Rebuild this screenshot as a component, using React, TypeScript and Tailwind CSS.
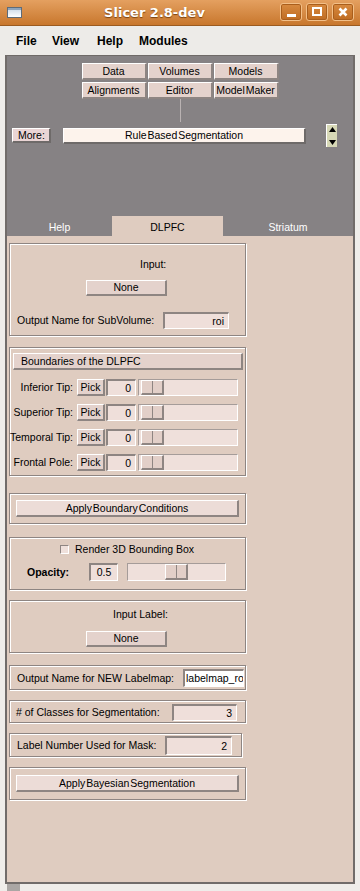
import React from "react";

const RAISED =
  "border-t border-l border-r-2 border-b-2 border-t-white border-l-white border-r-[#8e8582] border-b-[#8e8582]";
const SUNKEN =
  "border-t-2 border-l-2 border-r border-b border-t-[#8e8582] border-l-[#8e8582] border-r-white border-b-white";
const GROOVE =
  "border border-[#8e8582] shadow-[inset_1px_1px_0_#ffffff,1px_1px_0_#ffffff]";

function Btn({ className, children }: { className: string; children?: React.ReactNode }) {
  return (
    <div
      className={`flex items-center justify-center bg-[#e4d2cc] text-[10.5px] leading-none ${RAISED} ${className}`}
    >
      {children}
    </div>
  );
}

function Entry({ className, children }: { className: string; children?: React.ReactNode }) {
  return (
    <div
      className={`flex items-center overflow-hidden whitespace-nowrap text-[10.5px] leading-none ${SUNKEN} ${className}`}
    >
      {children}
    </div>
  );
}

function Slider({ className, thumb }: { className: string; thumb: string }) {
  return (
    <div
      className={`relative h-[17px] bg-[#efe0db] border border-t-[#a59c99] border-l-[#a59c99] border-r-white border-b-white ${className}`}
    >
      <div
        className={`absolute top-0 bottom-0 w-[23px] bg-[#e2cfc8] border-t border-l border-r-2 border-b-2 border-t-white border-l-white border-r-[#8e8582] border-b-[#8e8582] flex justify-center ${thumb}`}
      >
        <div className="w-[1px] h-full bg-[#8e8582]" />
      </div>
    </div>
  );
}

function TitleButton({ children }: { children: React.ReactNode }) {
  return (
    <div className="w-[22px] h-[18px] rounded-[3px] border border-[#f2bf88] bg-[linear-gradient(#d88a40,#bf6c22)] shadow-[inset_0_0_0_1px_#a95e1c] flex items-center justify-center">
      {children}
    </div>
  );
}

function PickRow({ label }: { label: string }) {
  return (
    <div className="h-[17px] flex items-center">
      <div className="w-[63px] text-right text-[10.5px] leading-none whitespace-nowrap">{label}</div>
      <Btn className="ml-[4px] w-[28px] h-[17px]">Pick</Btn>
      <Entry className="ml-[1px] w-[30px] h-[17px] justify-end pr-[4px] bg-[#efdfda]">0</Entry>
      <Slider className="ml-[2px] w-[100px]" thumb="left-[2px]" />
    </div>
  );
}

export default function App() {
  return (
    <div className="w-[360px] h-[891px] overflow-hidden bg-[#efedea] font-['Liberation_Sans',Arial,sans-serif] text-black">
      {/* Title bar */}
      <div className="h-[26px] flex items-center bg-[linear-gradient(#e4a060,#c8772d)] border-b border-[#9b5b20]">
        <div className="ml-[7px] w-[15px] h-[11px] border border-[#5e6b78] bg-[linear-gradient(#c7d6e6,#ffffff)] shadow-[inset_0_2px_0_#8ea4bb]" />
        <div className="flex-1 pl-[7px] text-center text-white font-['DejaVu_Sans',sans-serif] font-bold text-[13px] leading-none [text-shadow:0_1px_1px_#7a4210]">
          Slicer 2.8-dev
        </div>
        <div className="flex items-center gap-[4px] mr-[6px] pb-[2px]">
          <TitleButton>
            <div className="w-[9px] h-[3px] bg-white mt-[7px]" />
          </TitleButton>
          <TitleButton>
            <div className="w-[10px] h-[9px] border-2 border-white" />
          </TitleButton>
          <TitleButton>
            <svg width="10" height="10" viewBox="0 0 10 10">
              <path d="M1.5 1.5 L8.5 8.5 M8.5 1.5 L1.5 8.5" stroke="#ffffff" strokeWidth="2.6" />
            </svg>
          </TitleButton>
        </div>
      </div>

      {/* Menu bar */}
      <div className="h-[29px] flex items-center bg-[#edebe8] font-bold text-[12px] leading-none pt-[1px]">
        <span className="ml-[16px] w-[36px]">File</span>
        <span className="w-[45px]">View</span>
        <span className="w-[42px]">Help</span>
        <span>Modules</span>
      </div>

      {/* Main frame */}
      <div className="ml-[5px] w-[350px] border-x-2 border-[#716c6a] flex flex-col">
        {/* Gray module selector */}
        <div className="h-[161px] border-t border-[#6f6a68] bg-[#868284] flex flex-col">
          <div className="mt-[7px] self-center grid grid-cols-[65px_65px_65px] gap-x-[1px] gap-y-[2px]">
            <Btn className="h-[17px] bg-[#dccbc3]">Data</Btn>
            <Btn className="h-[17px] bg-[#dccbc3]">Volumes</Btn>
            <Btn className="h-[17px] bg-[#dccbc3]">Models</Btn>
            <Btn className="h-[17px] bg-[#dccbc3]">Alignments</Btn>
            <Btn className="h-[17px] bg-[#dccbc3]">Editor</Btn>
            <Btn className="h-[17px] bg-[#dccbc3] [word-spacing:-2px]">Model Maker</Btn>
          </div>
          <div className="self-center w-[1px] h-[23px] bg-[#b9b2b2]" />
          <div className="mt-[2px] h-[23px] flex items-center">
            <div className="ml-[5px] w-[39px] h-[15px] flex items-center pl-[5px] bg-[#ead5d5] text-[10.5px] leading-none border-t border-l border-r-2 border-b-2 border-t-white border-l-white border-r-[#6e6a69] border-b-[#6e6a69]">
              More:
            </div>
            <div className="ml-[12px] w-[243px] h-[16px] flex items-center justify-center bg-[#fdf3ec] text-[10.5px] leading-none [word-spacing:-2px] border-t border-l border-r-2 border-b-2 border-t-white border-l-white border-r-[#6e6a69] border-b-[#6e6a69]">
              Rule Based Segmentation
            </div>
            <div className="ml-[20px] w-[11px] h-[23px] bg-[#d7d8b6] border-t border-l border-t-white border-l-white flex flex-col items-center justify-between py-[2px]">
              <svg width="7" height="5" viewBox="0 0 7 5">
                <path d="M3.5 0 L7 5 L0 5 Z" fill="#000" />
              </svg>
              <svg width="7" height="5" viewBox="0 0 7 5">
                <path d="M0 0 L7 0 L3.5 5 Z" fill="#000" />
              </svg>
            </div>
          </div>
          <div className="flex-1" />
        </div>

        {/* Tabs */}
        <div className="h-[20px] flex bg-[#868284] text-[10.5px] leading-none">
          <div className="w-[105px] flex items-center justify-center pt-[3px] text-white">Help</div>
          <div className="w-[111px] flex items-center justify-center pt-[3px] bg-[#dfccc0]">DLPFC</div>
          <div className="flex-1 flex items-center justify-center pt-[3px] text-white">Striatum</div>
        </div>

        {/* Content */}
        <div className="h-[646px] bg-[#dfccc0] pl-[2px] flex flex-col text-[10.5px] leading-none">
          {/* Panel 1 */}
          <div className={`mt-[7px] w-[237px] h-[93px] flex flex-col ${GROOVE}`}>
            <div className="mt-[13px] h-[14px] flex items-center pl-[130px]">Input:</div>
            <Btn className="mt-[9px] ml-[76px] w-[81px] h-[16px]">None</Btn>
            <div className="mt-[16px] h-[17px] flex items-center">
              <div className="ml-[7px] w-[146px] whitespace-nowrap">Output Name for SubVolume:</div>
              <Entry className="w-[66px] h-[17px] justify-end pr-[4px] bg-[#efdfda]">roi</Entry>
            </div>
          </div>

          {/* Panel 2 */}
          <div className={`mt-[11px] w-[237px] h-[129px] flex flex-col ${GROOVE}`}>
            <Btn className="mt-[5px] ml-[3px] w-[230px] h-[17px] !justify-start pl-[7px] bg-[#dfccc0]">
              Boundaries of the DLPFC
            </Btn>
            <div className="mt-[9px] flex flex-col gap-[8px]">
              <PickRow label="Inferior Tip:" />
              <PickRow label="Superior Tip:" />
              <PickRow label="Temporal Tip:" />
              <PickRow label="Frontal Pole:" />
            </div>
          </div>

          {/* Panel 3 */}
          <div className={`mt-[17px] w-[237px] h-[31px] flex flex-col ${GROOVE}`}>
            <Btn className="mt-[6px] ml-[6px] w-[223px] h-[17px] bg-[#ecdcd7] [word-spacing:-2px]">
              Apply Boundary Conditions
            </Btn>
          </div>

          {/* Panel 4 */}
          <div className={`mt-[13px] w-[237px] h-[53px] flex flex-col ${GROOVE}`}>
            <div className="mt-[5px] h-[13px] flex items-center">
              <div className="ml-[50px] w-[9px] h-[9px] bg-[#efe0db] border border-t-[#8e8582] border-l-[#8e8582] border-r-white border-b-white" />
              <div className="ml-[6px] whitespace-nowrap">Render 3D Bounding Box</div>
            </div>
            <div className="mt-[7px] h-[18px] flex items-center">
              <div className="ml-[17px] w-[62px] font-bold">Opacity:</div>
              <Entry className="w-[29px] h-[18px] justify-center bg-[#efdfda]">0.5</Entry>
              <Slider className="ml-[9px] w-[99px] !h-[18px]" thumb="left-[37px]" />
            </div>
          </div>

          {/* Panel 5 */}
          <div className={`mt-[10px] w-[237px] h-[53px] flex flex-col ${GROOVE}`}>
            <div className="mt-[6px] h-[14px] flex items-center pl-[103px]">Input Label:</div>
            <Btn className="mt-[10px] ml-[76px] w-[81px] h-[16px]">None</Btn>
          </div>

          {/* Panel 6 */}
          <div className={`mt-[12px] w-[237px] h-[25px] flex flex-col ${GROOVE}`}>
            <div className="mt-[3px] h-[18px] flex items-center">
              <div className="ml-[7px] w-[166px] whitespace-nowrap">Output Name for NEW Labelmap:</div>
              <Entry className="w-[61px] h-[18px] pl-[1px] bg-white">labelmap_roi</Entry>
            </div>
          </div>

          {/* Panel 7 */}
          <div className={`mt-[10px] w-[237px] h-[23px] flex flex-col ${GROOVE}`}>
            <div className="mt-[3px] h-[17px] flex items-center">
              <div className="ml-[6px] w-[156px] whitespace-nowrap"># of Classes for Segmentation:</div>
              <Entry className="w-[65px] h-[17px] justify-end pr-[4px] bg-[#efdfda]">3</Entry>
            </div>
          </div>

          {/* Panel 8 */}
          <div className={`mt-[10px] w-[233px] h-[24px] flex flex-col ${GROOVE}`}>
            <div className="mt-[2px] h-[19px] flex items-center">
              <div className="ml-[7px] w-[148px] whitespace-nowrap">Label Number Used for Mask:</div>
              <Entry className="w-[67px] h-[19px] justify-end pr-[4px] bg-[#efdfda]">2</Entry>
            </div>
          </div>

          {/* Panel 9 */}
          <div className={`mt-[10px] w-[237px] h-[33px] flex flex-col ${GROOVE}`}>
            <Btn className="mt-[7px] ml-[6px] w-[223px] h-[17px] bg-[#ecdcd7] [word-spacing:-2px]">
              Apply Bayesian Segmentation
            </Btn>
          </div>
        </div>

        {/* Bottom border + scrollbar */}
        <div className="h-[2px] bg-[#716c6a]" />
      </div>
      <div className="h-[7px] flex">
        <div className="ml-[7px] w-[13px] h-full bg-[#aaa6a4]" />
      </div>
    </div>
  );
}
